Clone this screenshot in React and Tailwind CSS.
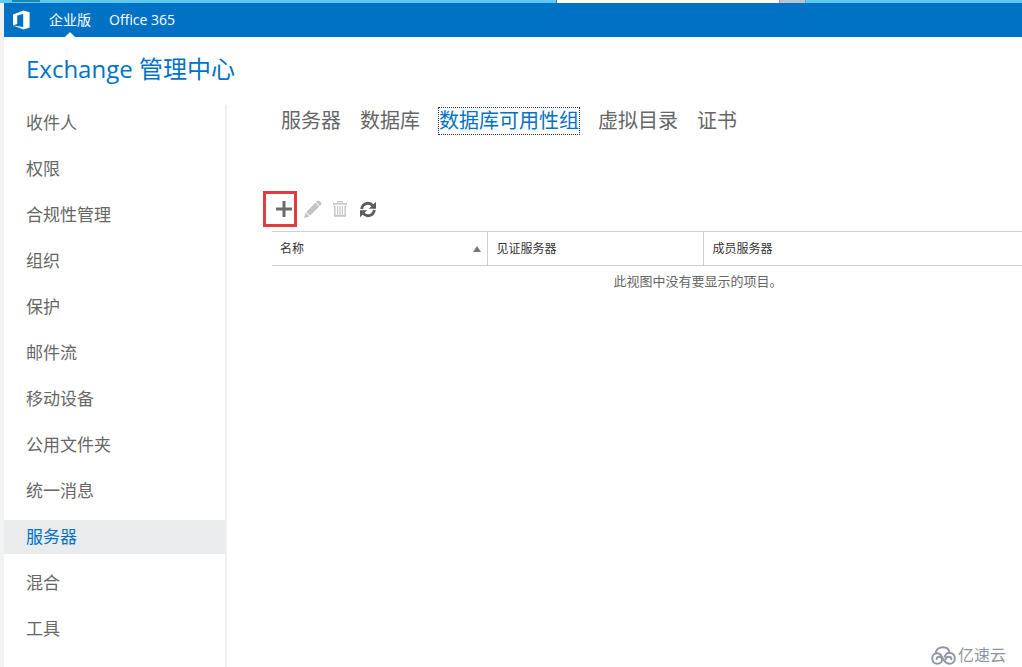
import React from "react";

const navItems = [
  "收件人", "权限", "合规性管理", "组织", "保护", "邮件流",
  "移动设备", "公用文件夹", "统一消息", "服务器", "混合", "工具",
];
const tabs = ["服务器", "数据库", "数据库可用性组", "虚拟目录", "证书"];

function OfficeLogo() {
  return (
    <svg className="h-5 w-5" viewBox="0 0 20 20" fill="#fff" aria-hidden="true">
      <path fillRule="evenodd" d="M1 4.4 11.6 0.6 17.6 2.2V17.6L11.6 19.4 1 15.6 11.2 16.9V4L5.2 5.4V14L1 15.6Z" />
    </svg>
  );
}

function PlusIcon() {
  return (
    <svg className="h-4 w-4" viewBox="0 0 16 16" aria-hidden="true">
      <path d="M8 0V16M0 8H16" stroke="#6c6c6c" strokeWidth="3" />
    </svg>
  );
}

function PencilIcon() {
  return (
    <svg className="h-[18px] w-[18px]" viewBox="0 0 18 18" fill="#c4c4c4" aria-hidden="true">
      <path d="M0 18 1.6 12.6 5.4 16.4Z" />
      <path d="M2.2 12 11.4 2.8 15.2 6.6 6 15.8Z" />
      <path d="M12.1 2.1 13.4 0.8Q14.4 0 15.4 0.9L17.1 2.6Q18 3.6 17.2 4.6L15.9 5.9Z" />
    </svg>
  );
}

function TrashIcon() {
  return (
    <svg className="h-4 w-4" viewBox="0 0 16 16" fill="none" stroke="#c8c8c8" aria-hidden="true">
      <path d="M1 2.8H15" strokeWidth="1.6" />
      <path d="M5.5 2V0.7H10.5V2" strokeWidth="1.2" />
      <path d="M2.8 4.5V14.9H13.2V4.5" strokeWidth="1.6" />
      <path d="M5.6 5V14M8 5V14M10.4 5V14" strokeWidth="1.3" />
    </svg>
  );
}

function RefreshIcon() {
  return (
    <svg className="h-[17px] w-4" viewBox="0 0 16 17" aria-hidden="true">
      <path d="M1.7 8.2A6.3 6.4 0 0 1 12.8 4.6" fill="none" stroke="#5c5c5c" strokeWidth="2.8" />
      <path d="M16 0.8V7.8H8.8Z" fill="#5c5c5c" />
      <path d="M14.3 8.8A6.3 6.4 0 0 1 3.2 12.4" fill="none" stroke="#5c5c5c" strokeWidth="2.8" />
      <path d="M0 16.2V9.2H7.2Z" fill="#5c5c5c" />
    </svg>
  );
}

function CloudLogo() {
  return (
    <svg className="h-[19px] w-[25px]" viewBox="0 0 25 19" fill="none" stroke="#9095a0" strokeWidth="1.9" strokeLinecap="round" aria-hidden="true">
      <path d="M4.6 7.2C5 3.6 8 1.2 11.8 1.2C15.4 1.2 18.2 3.4 18.6 6.8C21.8 7.2 23.8 9.4 23.8 12.4C23.8 15.6 21.6 17.8 18.4 17.8C15.6 17.8 14.2 16.2 12.8 14.2L10.4 10C9.4 8.2 8 7.2 6.4 7.2C3.4 7.2 1.2 9.6 1.2 12.6C1.2 15.6 3.4 17.8 6.4 17.8C9 17.8 11 16 11 13.8C11 12 9.8 10.8 8.2 10.8C6.6 10.8 5.6 11.8 5.6 13.2" />
      <path d="M13.6 10.6C14.6 8.4 16.2 6.8 18.6 6.8" />
      <path d="M14.4 13.4C15 11.6 16.4 10.8 17.8 10.8C19.4 10.8 20.4 11.8 20.4 13.2" />
    </svg>
  );
}

export default function App() {
  return (
    <div className="flex min-h-screen flex-col bg-white font-['Open_Sans','Noto_Sans_CJK_SC',sans-serif] text-[#666]">
      <div className="flex h-[3px] bg-[#62c8ee]" aria-hidden="true">
        <div className="ml-3 h-0.5 w-7 bg-[#1588b5]" />
        <div className="ml-auto flex w-[466px]">
          <div className="w-[223px] border-l border-[#3a7f9c] bg-white" />
          <div className="w-[27px] border-x border-[#8199a8] bg-[#b6c5d0]" />
        </div>
      </div>
      <div className="flex flex-1 flex-col border-l-4 border-[#f1f2f2]">
        <header className="flex h-[34px] items-center bg-[#0072c6] pl-2 text-white">
          <OfficeLogo />
          <nav className="flex h-full items-center gap-[18px] pl-[17px] text-sm">
            <a href="#enterprise" className="relative flex h-full items-center">
              企业版
              <svg className="absolute bottom-0 left-4 h-[5px] w-[10px]" viewBox="0 0 10 5" aria-hidden="true">
                <path d="M0 5 5 0 10 5Z" fill="#fff" />
              </svg>
            </a>
            <a href="#office365">Office 365</a>
          </nav>
        </header>
        <h1 className="pt-3 pl-[22px] text-2xl leading-10 text-[#0072c6]">
          Exchange 管理中心
        </h1>
        <div className="flex flex-1 pt-4">
          <nav className="flex w-[223px] shrink-0 flex-col gap-3 border-r-2 border-[#f0f0f0] pt-px text-[17px]">
            {navItems.map((item) => (
              <a
                key={item}
                href={"#" + item}
                className={
                  "flex h-[34px] items-center pl-[22px] " +
                  (item === "服务器" ? "bg-[#e9ebec] text-[#0072c6]" : "")
                }
              >
                {item}
              </a>
            ))}
          </nav>
          <main className="min-w-0 flex-1">
            <nav className="flex gap-[19px] pt-[3px] pl-[54px] text-xl leading-[26px]">
              {tabs.map((tab) => (
                <a
                  key={tab}
                  href={"#tab-" + tab}
                  className={tab === "数据库可用性组" ? "text-[#0072c6] outline-1 outline-dotted outline-[#333]" : ""}
                >
                  {tab}
                </a>
              ))}
            </nav>
            <div className="flex items-center pt-[57px] pl-9">
              <button type="button" aria-label="新建" className="flex h-9 w-[34px] items-center justify-center border-3 border-[#e13b3f] pl-2">
                <PlusIcon />
              </button>
              <button type="button" aria-label="编辑" className="ml-[7px]"><PencilIcon /></button>
              <button type="button" aria-label="删除" className="ml-[10px]"><TrashIcon /></button>
              <button type="button" aria-label="刷新" className="ml-3"><RefreshIcon /></button>
            </div>
            <div className="pt-1 pl-[45px]">
              <table className="w-full table-fixed border-collapse text-xs">
                <thead>
                  <tr className="h-[34px] border-y border-[#cfcfcf] text-left text-[#333]">
                    <th className="w-[215px] border-r border-[#cfcfcf] pr-1.5 pl-2 font-normal">
                      <span className="flex items-center justify-between">
                        名称
                        <svg className="h-[6px] w-2" viewBox="0 0 8 6" aria-hidden="true">
                          <path d="M4 0 8 6H0Z" fill="#777" />
                        </svg>
                      </span>
                    </th>
                    <th className="w-[216px] border-r border-[#cfcfcf] pl-[9px] font-normal">见证服务器</th>
                    <th className="pl-[9px] font-normal">成员服务器</th>
                  </tr>
                </thead>
                <tbody>
                  <tr>
                    <td colSpan={3} className="h-8 pl-[102px] text-center text-[13px]">此视图中没有要显示的项目。</td>
                  </tr>
                </tbody>
              </table>
            </div>
          </main>
        </div>
      </div>
      <div className="absolute right-4 bottom-0 flex items-center gap-0.5 text-base leading-6 text-[#9095a0]">
        <CloudLogo />
        <span>亿速云</span>
      </div>
    </div>
  );
}
